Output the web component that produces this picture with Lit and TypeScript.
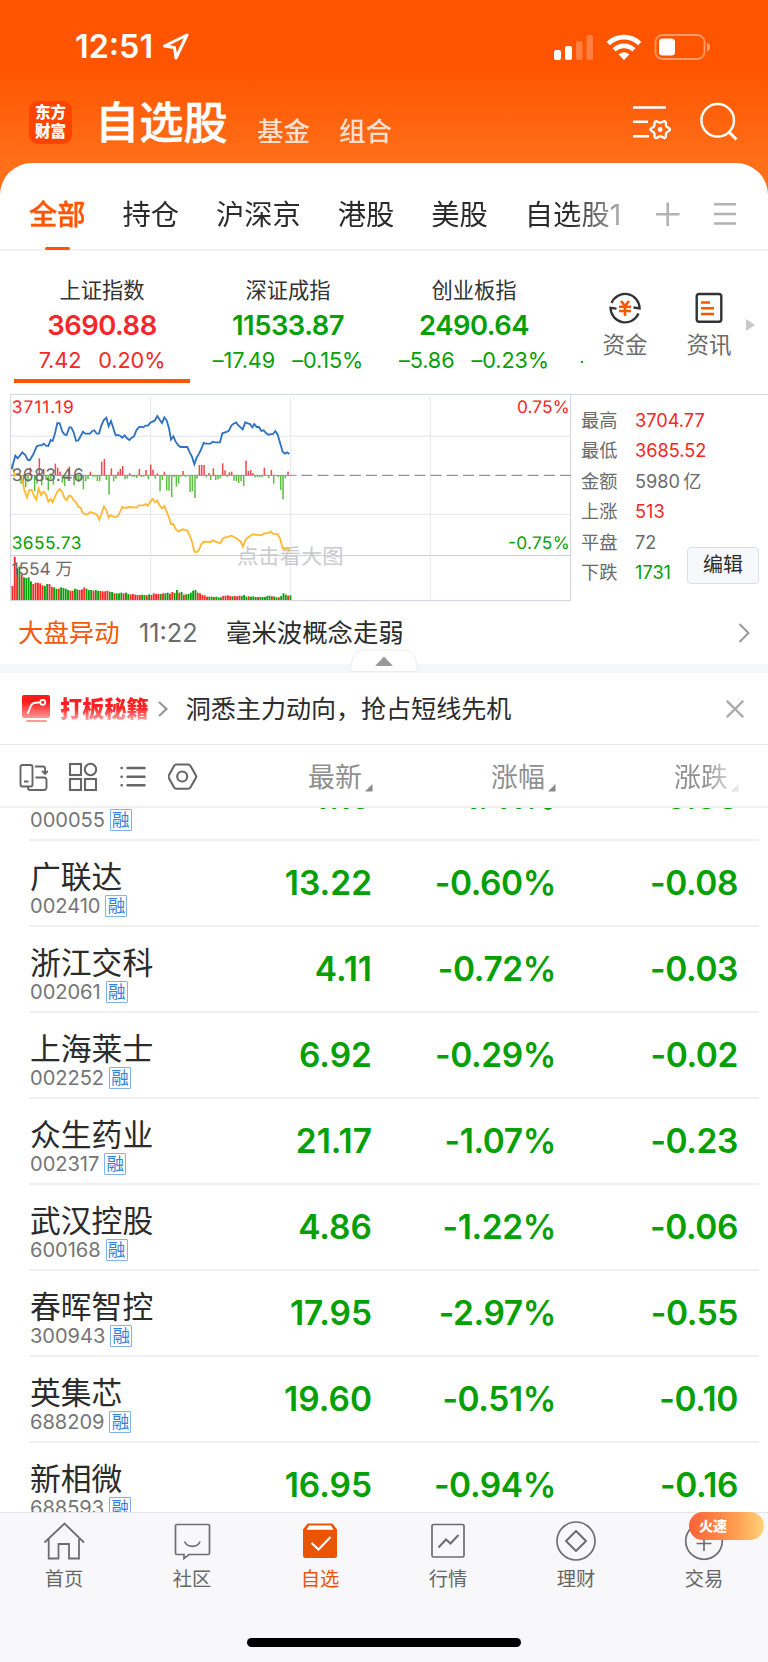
import { LitElement, html, css, svg } from "lit";
import { customElement } from "lit/decorators.js";

const BLUE =
  "35,252 46,212 53,220 67,202 76,210 83,224 89,226 100,208 110,184 117,181 125,181 131,176 138,182 145,183 152,165 158,168 165,145 172,114 179,115 187,140 194,149 200,150 208,127 214,127 221,142 228,167 235,166 242,153 249,140 256,146 270,146 277,138 283,136 290,146 297,146 304,122 311,106 319,98 326,124 333,108 340,130 347,151 354,150 361,153 367,158 374,151 381,160 388,165 395,158 402,154 409,136 416,127 423,125 430,127 436,122 444,122 451,113 464,107 472,93 479,104 486,114 493,97 500,106 507,130 513,164 520,154 527,170 534,180 541,186 562,186 569,202 576,215 583,238 590,218 597,206 604,192 611,174 617,176 632,176 638,170 645,172 660,172 667,145 680,141 687,137 694,122 701,116 708,112 716,122 728,133 736,112 743,115 750,117 757,127 763,117 770,126 777,126 784,138 791,136 798,144 805,149 819,147 826,138 833,149 840,173 848,200 855,206 862,202 868,207";
const YELLOW =
  "35,238 45,272 53,265 61,270 67,285 73,315 81,338 88,315 95,315 103,335 109,344 116,310 123,330 130,320 138,328 145,350 152,342 158,352 165,335 172,320 179,312 186,320 193,338 200,346 207,332 214,334 221,346 228,352 235,365 242,368 249,385 263,389 270,381 283,385 290,388 298,404 305,384 312,364 319,376 326,398 332,391 347,397 355,392 367,366 375,369 388,366 410,368 416,361 430,361 437,357 444,362 451,349 458,342 465,352 472,347 479,362 486,370 493,363 500,380 507,398 513,418 520,417 527,432 534,439 549,433 562,437 569,452 576,470 583,500 590,502 597,494 604,478 611,470 632,471 638,466 660,475 667,462 674,458 694,452 708,459 722,470 729,485 736,466 743,458 757,448 784,451 791,446 805,444 812,439 819,446 833,448 840,460 848,490 855,494 862,489 868,496";
const UP =
  "91:22,118:50,131:18,166:34,173:22,180:10,208:25,271:10,305:40,313:48,334:20,354:10,361:18,368:27,389:5,418:18,438:15,452:31,459:16,472:5,493:10,549:12,598:30,605:30,612:30,627:6,640:20,668:35,675:14,688:8,695:10,738:43,745:12,752:15,758:6,793:22,814:15,864:10";
const DOWN =
  "63:25,70:30,77:35,84:20,104:48,111:25,125:30,138:14,145:45,152:12,160:28,187:22,194:32,201:12,222:30,230:12,236:20,243:12,250:42,257:18,264:12,278:4,285:4,292:17,299:17,319:14,327:58,341:18,348:10,375:12,382:10,396:4,403:5,410:8,424:5,431:4,445:12,466:10,480:48,487:14,500:45,507:46,515:65,522:5,529:34,536:25,543:4,556:5,570:50,577:48,585:68,591:10,619:6,632:14,647:14,654:12,661:8,682:5,702:16,709:17,716:23,723:17,731:32,765:6,772:5,779:6,786:5,806:8,821:25,835:5,842:44,849:72,856:8";
const VOLUME = [
  42, 130, 95, 100, 76, 68, 66, 68, 56, 48, 52, 52, 50, 44, 42, 48, 48, 40, 38, 34, 34, 38, 36, 34, 30, 28, 28, 34, 32, 30,
  32, 38, 34, 30, 30, 28, 30, 27, 27, 26, 26, 28, 25, 24, 20, 20, 20, 22, 20, 22, 18, 17, 18, 16, 15, 15, 16, 15, 14, 17,
  15, 20, 18, 18, 18, 20, 20, 22, 19, 24, 21, 30, 22, 24, 16, 17, 18, 22, 28, 30, 22, 20, 15, 14, 10, 10, 10, 9, 10, 8,
  8, 12, 13, 14, 12, 11, 12, 11, 13, 12, 15, 10, 11, 10, 11, 9, 9, 9, 9, 9, 12, 13, 11, 11, 8, 8, 12, 20, 16, 13, 14,
];
const VCOLOR =
  "rrrgrggggrrrrrggrrggrggggrrggrrrgggrggrrrrggrgggrggrrrrrggrgrrrrgrggrrggrgrgggggrrrrrggrgggrrrrgrrrgggrgggrgggggrggrgggrg";

const bars = (src: string) => src.split(",").map((p) => p.split(":").map(Number));

const INDICES = [
  { name: "上证指数", value: "3690.88", chg: "7.42", pct: "0.20%", up: true },
  { name: "深证成指", value: "11533.87", chg: "–17.49", pct: "–0.15%", up: false },
  { name: "创业板指", value: "2490.64", chg: "–5.86", pct: "–0.23%", up: false },
];
const STATS = [
  ["最高", "3704.77", "red"],
  ["最低", "3685.52", "red"],
  ["金额", "5980 亿", "gray"],
  ["上涨", "513", "red"],
  ["平盘", "72", "gray"],
  ["下跌", "1731", "green"],
];
const ROWS = [
  ["", "000055", "4.19", "-1.41%", "-0.06"],
  ["广联达", "002410", "13.22", "-0.60%", "-0.08"],
  ["浙江交科", "002061", "4.11", "-0.72%", "-0.03"],
  ["上海莱士", "002252", "6.92", "-0.29%", "-0.02"],
  ["众生药业", "002317", "21.17", "-1.07%", "-0.23"],
  ["武汉控股", "600168", "4.86", "-1.22%", "-0.06"],
  ["春晖智控", "300943", "17.95", "-2.97%", "-0.55"],
  ["英集芯", "688209", "19.60", "-0.51%", "-0.10"],
  ["新相微", "688593", "16.95", "-0.94%", "-0.16"],
];

const base = css`
  :host, * { box-sizing: border-box; }
  svg { display: block; flex: none; }
  .red { color: #f82626; }
  .green { color: #05a005; }
  .gray { color: #6b6b6b; }
`;

@customElement("top-header")
class TopHeader extends LitElement {
  static styles = [base, css`
    :host { display: block; height: 200px; color: #fff; background: linear-gradient(#ff5500 0, #ff5500 70px, #ff6f1a 163px, #ff701c 200px); }
    .status { display: flex; align-items: center; height: 93px; padding: 0 57px 0 75px; }
    .time { font-size: 32.3px; font-weight: 600; line-height: 40px; letter-spacing: 0; width: 87px; }
    .grow { flex: 1; }
    .nav { display: flex; height: 61px; padding: 0 30px 0 29px; }
    .logo { width: 43px; height: 43px; margin-top: 8px; border-radius: 9px; background: #ff4400; font-size: 15.5px; font-weight: 900; line-height: 18.5px; padding-top: 3px; text-align: center; }
    .title { margin-left: 23px; font-size: 44.3px; font-weight: 500; line-height: 60px; height: 61px; -webkit-text-stroke: .5px #fff; }
    .link { font-size: 26.5px; font-weight: 500; line-height: 40px; margin: 18px 0 0 29px; opacity: .8; }
    .link + .link { margin-left: 29px; }
    .set { margin-top: 11px; margin-right: 26px; }
    .find { margin-top: 9px; }
  `];
  render() {
    return html`
      <div class="status">
        <span class="time">12:51</span>
        <svg width="27" height="27" viewBox="0 0 27 27"><path d="M25 2 L2.500 13 L12.500 14.600 L14 25 Z" fill="none" stroke="#fff" stroke-width="3" stroke-linejoin="round"/></svg>
        <span class="grow"></span>
        <svg width="158" height="28" viewBox="0 0 158 28" fill="#fff">
          <rect x="1" y="17" width="7" height="10" rx="2"/><rect x="12" y="13" width="7" height="14" rx="2"/>
          <g opacity=".25"><rect x="23" y="8" width="6.500" height="19" rx="2"/><rect x="33.500" y="2" width="6.500" height="25" rx="2"/></g>
          <g fill="none" stroke="#fff" stroke-width="4.800">
            <path d="M55.300 10.600a22.500 22.500 0 0 1 31.400 0"/><path d="M61.200 16.900a14 14 0 0 1 19.600 0"/>
          </g>
          <path d="M71 27l-5.400-5.600a8 8 0 0 1 10.800 0z"/>
          <rect x="102.500" y="2" width="49" height="24" rx="7" fill="none" stroke="#fff" stroke-opacity=".4" stroke-width="1.800"/>
          <rect x="106" y="5.500" width="16" height="17" rx="3.500"/><path d="M154 9.500c4 1 4 8 0 9z" opacity=".45"/>
        </svg>
      </div>
      <div class="nav">
        <div class="logo">东方<br>财富</div>
        <div class="title">自选股</div><div class="link">基金</div><div class="link">组合</div>
        <span class="grow"></span>
        <svg class="set" width="40" height="36" viewBox="0 0 40 36" fill="none" stroke="#fff" stroke-width="2.600">
          <path d="M0 3.500h33M0 17.800h15M0 32.200h16"/>
          <path d="M22.200 17.500C24 16.200 24.600 18.600 27.200 18.600S30.400 16.200 32.200 17.500S32 20.400 33.300 22.200S37 23.800 37 25.500S34.600 27 33.300 28.900S34 32.600 32.200 33.700S29.800 32.400 27.200 32.400S24 34.900 22.200 33.700S22.400 30.800 21.100 28.900S17.500 27.300 17.500 25.500S19.800 24 21.100 22.200S20.400 18.700 22.200 17.500z" stroke-linejoin="round" stroke-width="2.400"/>
          <circle cx="27.200" cy="25.500" r="2.400" fill="#fff" stroke="none"/>
        </svg>
        <svg class="find" width="39" height="40" viewBox="0 0 39 40" fill="none" stroke="#fff" stroke-width="2.500"><circle cx="18.700" cy="18.300" r="16.300"/><path d="M29.500 29.500l8 8" stroke-width="3"/></svg>
      </div>`;
  }
}

@customElement("group-tabs")
class GroupTabs extends LitElement {
  static styles = [base, css`
    :host { display: flex; height: 88px; border-bottom: 2px solid #f3f3f5; padding-right: 31px; color: #2b2b2b; }
    .tabs { display: flex; gap: 36.9px; width: 642px; padding-left: 29px; overflow: hidden; white-space: nowrap; font-size: 28.3px; line-height: 104px; height: 87px;
      -webkit-mask-image: linear-gradient(90deg, #000 570px, rgba(0,0,0,.25) 632px); mask-image: linear-gradient(90deg, #000 570px, rgba(0,0,0,.25) 632px); }
    .on { color: #ff5500; font-weight: 500; -webkit-text-stroke: .4px #ff5500; display: flex; flex-direction: column; align-items: center; height: 87px; }
    .on i { width: 25px; height: 3px; margin-top: -20px; border-radius: 2px; background: #ff5500; }
    .icons { display: flex; justify-content: space-between; flex: 1; padding: 39px 0 0 13px; }
  `];
  render() {
    return html`<div class="tabs">
        <div class="on"><span>全部</span><i></i></div>
        ${["持仓", "沪深京", "港股", "美股", "自选股1"].map((t) => html`<span>${t}</span>`)}
      </div>
      <div class="icons">
        <svg width="26" height="24" viewBox="0 0 26 24" stroke="#b2b2b2" stroke-width="2.600"><path d="M1 12.200h23.500M12.700 .5v23.500"/></svg>
        <svg width="24" height="24" viewBox="0 0 24 24" stroke="#b2b2b2" stroke-width="2.600"><path d="M1 2.300h22M1 12h22M1 21.500h22"/></svg>
      </div>`;
  }
}

@customElement("index-strip")
class IndexStrip extends LitElement {
  static styles = [base, css`
    :host { display: flex; height: 142px; padding-left: 9px; }
    .idx { width: 186px; height: 132px; padding-top: 22px; display: flex; flex-direction: column; align-items: center; flex: none; }
    .name { font-size: 21.3px; line-height: 34px; color: #333; }
    .val { font-size: 27.4px; line-height: 35px; font-weight: 600; letter-spacing: -.5px; margin-top: 1px; }
    .chg { display: flex; gap: 17px; font-size: 21.7px; line-height: 34px; letter-spacing: -.1px; white-space: nowrap; }
    .bar { width: 176px; height: 4px; margin-top: 2px; background: #ff5500; }
    .more { width: 16px; padding-top: 85px; line-height: 30px; padding-left: 14px; flex: none; }
    .dot { display: block; width: 2px; height: 2px; background: #05a005; margin-top: 25px; }
    .act { width: 84px; flex: none; display: flex; flex-direction: column; align-items: center; padding-top: 39px; color: #6b6b6b; font-size: 22.5px; line-height: 36px; }
    .act span { margin-top: 1px; }
    .arrow { margin: 67px 0 0 -5px; }
  `];
  render() {
    return html`${INDICES.map((d, i) => html`<div class="idx ${d.up ? "red" : "green"}">
        <span class="name">${d.name}</span><span class="val">${d.value}</span>
        <span class="chg"><span>${d.chg}</span><span>${d.pct}</span></span>
        ${i === 0 ? html`<span class="bar"></span>` : ""}
      </div>`)}
      <div class="more"><i class="dot"></i></div>
      <div class="act">
        <svg width="36" height="36" viewBox="0 0 36 36" fill="none" stroke="#333" stroke-width="2.300">
          <path d="M4.500 13A14.600 14.600 0 0 1 32.600 18.500L26.500 17.500M31.500 23.500A14.600 14.600 0 0 1 3.500 17.800L9.500 18.600"/>
          <path d="M14 11l4 5 4-5M12 16.800h12M12 21h12M18 16v10" stroke="#ff5500" stroke-width="2.600"/>
        </svg><span>资金</span></div>
      <div class="act">
        <svg width="36" height="36" viewBox="0 0 36 36" fill="none" stroke="#333" stroke-width="2.400"><rect x="5.700" y="4" width="24.600" height="27.800" rx="2.500"/>
          <path d="M10 12.500h9M10 18.300h13M10 24h13" stroke="#ff5500" stroke-width="2.400"/></svg><span>资讯</span></div>
      <svg class="arrow" width="9" height="14" viewBox="0 0 9 14"><path d="M0 1l9 6-9 6z" fill="#c8c8c8"/></svg>`;
  }
}

@customElement("market-chart")
class MarketChart extends LitElement {
  static styles = [base, css`
    :host { display: flex; height: 211px; }
    .lab { font-size: 52px; }
    .side { width: 196px; border-top: 1px solid #d5d7e2; padding: 10px 0 0 9px; margin-top: 1px; position: relative; }
    .stat { display: flex; font-size: 18.2px; line-height: 30.4px; color: #6b6b6b; word-spacing: -2px; }
    .stat span:first-child { width: 54px; }
    .edit { position: absolute; right: 9px; top: 152px; width: 72px; height: 37px; border: 1px solid #dcdee6; border-radius: 4px; background: #f7f8fb; color: #2b2b2b; font-size: 20px; line-height: 34px; text-align: center; }
  `];
  render() {
    return html`<svg width="572" height="211" viewBox="0 24 1716 633" font-size="53" text-rendering="geometricPrecision">
      <g stroke="#e3e6ee" stroke-width="3" fill="none">
        <path d="M33 153.500H1712M33 388H1712M452 36V508M872 36V508M1291 36V508M452 516V646M872 516V646M1291 516V646"/>
        <path d="M32 28H1716M32 28V647H1712V28M32 511.500H1712" stroke="#cfd2de"/>
      </g>
      <path d="M33 271H890" stroke="#777" stroke-width="2.500"/>
      <path d="M904 271H1712" stroke="#777" stroke-width="3" stroke-dasharray="33 15.500"/>
      <text x="711" y="536" font-size="64" fill="#c9cacd">点击看大图</text>
      ${bars(UP).map(([x, h]) => svg`<rect x=${x - 2.2} y=${270 - h} width="4.600" height=${h} fill="#ef4a50"/>`)}
      ${bars(DOWN).map(([x, h]) => svg`<rect x=${x - 2.2} y="271" width="4.600" height=${h} fill="#5fbe46"/>`)}
      ${VOLUME.map((h, i) => svg`<rect x=${34.5 + i * 6.95} y=${645 - h} width="5.600" height=${h} fill=${VCOLOR[i] === "r" ? "#f92a2a" : "#0aa00a"}/>`)}
      <polyline points=${YELLOW} fill="none" stroke="#ffb935" stroke-width="5.500"/>
      <polyline points=${BLUE} fill="none" stroke="#2e73c2" stroke-width="5.500"/>
      <text class="lab" x="35" y="84" fill="#f82626" textLength="186">3711.19</text>
      <text class="lab" x="35" y="288" fill="#6b6b6b" textLength="216">3683.46</text>
      <text class="lab" x="35" y="491" fill="#05a005" textLength="209">3655.73</text>
      <text class="lab" x="35" y="569" fill="#6b6b6b" textLength="183">1554 万</text>
      <text class="lab" x="1551" y="84" fill="#f82626" textLength="158">0.75%</text>
      <text class="lab" x="1524" y="491" fill="#05a005" textLength="185">-0.75%</text>
    </svg>
    <div class="side">
      ${STATS.map(([k, v, c]) => html`<div class="stat"><span>${k}</span><span class=${c}>${v}</span></div>`)}
      <div class="edit">编辑</div>
    </div>`;
  }
}

@customElement("news-promo")
class NewsPromo extends LitElement {
  static styles = [base, css`
    :host { display: block; }
    .news { display: flex; align-items: center; height: 60px; padding: 0 18px 3px 18px; font-size: 25.4px; line-height: 40px; color: #2b2b2b; }
    .tag { color: #f25a0a; width: 121px; }
    .t { color: #6b6b6b; width: 87px; font-size: 25.3px; }
    .grow { flex: 1; }
    .band { height: 9px; background: #f5f6fa; position: relative; }
    .pull { position: absolute; left: 349px; top: -15px; }
    .promo { display: flex; align-items: center; height: 72px; border-bottom: 1px solid #e9e9ec; padding: 0 24px 0 21px; color: #2b2b2b; font-size: 25.05px; line-height: 40px; }
    .brand { margin-left: 9px; font-size: 22.2px; font-weight: 900; line-height: 36px; color: transparent; background: linear-gradient(#ff1e1e 35%, #ff2a2a 50%, #ffa0a0 80%); -webkit-background-clip: text; background-clip: text; }
    .chev { margin: 0 17px 0 8px; }
    .txt { padding-top: 1px; }
  `];
  render() {
    return html`<div class="news"><span class="tag">大盘异动</span><span class="t">11:22</span><span>毫米波概念走弱</span><span class="grow"></span>
        <svg width="12" height="22" viewBox="0 0 12 22" fill="none" stroke="#999" stroke-width="2"><path d="M1.500 2l9 9-9 9"/></svg></div>
      <div class="band"><svg class="pull" width="70" height="24" viewBox="0 0 70 24"><path d="M1 22.500c2-10 2-21 13-21.500h42c11 .5 11 11.500 13 21.500z" fill="#fff" stroke="#ececf0"/><path d="M26 17l9-9.500 9 9.500z" fill="#999"/></svg></div>
      <div class="promo">
        <svg width="30" height="30" viewBox="0 0 30 30"><defs><linearGradient id="g" x2="0" y2="1"><stop offset=".3" stop-color="#ff1a1a"/><stop offset="1" stop-color="#ff9a9a"/></linearGradient></defs>
          <rect x="1" y="1" width="28" height="23" rx="2" fill="url(#g)"/><rect x="5" y="26" width="21" height="2" rx="1" fill="#ff9a9a"/>
          <path d="M6 19.500c3-1 2.500-10 7-10.500l6-.8" fill="none" stroke="#fff" stroke-width="2"/><circle cx="21.800" cy="8.300" r="2.500" fill="none" stroke="#fff" stroke-width="1.800"/></svg>
        <span class="brand">打板秘籍</span>
        <svg class="chev" width="12" height="18" viewBox="0 0 12 18" fill="none" stroke="#999" stroke-width="2.200"><path d="M2 2l7.500 7L2 16"/></svg>
        <span class="txt">洞悉主力动向，抢占短线先机</span><span class="grow"></span>
        <svg width="18" height="18" viewBox="0 0 18 18" stroke="#aaa" stroke-width="2.300"><path d="M.8 .8l16.400 16.400M17.200 .8L.8 17.200"/></svg>
      </div>`;
  }
}

@customElement("quote-table")
class QuoteTable extends LitElement {
  static styles = [base, css`
    :host { display: block; }
    .head { display: flex; height: 63px; border-bottom: 2px solid #f0f0f2; padding: 2px 0 0 18px; align-items: center; color: #8f8f8f; font-size: 26.9px; line-height: 44px; }
    .tools { display: flex; gap: 20px; width: 290px; flex: none; }
    .col { display: flex; gap: 3px; width: 183px; align-items: flex-end; flex: none; }
    .col svg { margin-bottom: 7px; }
    .last { width: 76px; -webkit-mask-image: linear-gradient(90deg, #000 30px, rgba(0,0,0,.2) 62px); mask-image: linear-gradient(90deg, #000 30px, rgba(0,0,0,.2) 62px); }
    .body { height: 704px; overflow: hidden; }
    .rows { margin: -53px 9px 0 29px; }
    .row { display: flex; height: 86px; border-bottom: 2px solid #f0f0f2; }
    .who { width: 200px; padding: 15px 0 0 1px; }
    .name { height: 39px; font-size: 30.8px; line-height: 41px; color: #2b2b2b; white-space: nowrap; }
    .code { display: flex; gap: 5px; height: 22px; font-size: 20.1px; line-height: 22px; color: #757575; letter-spacing: -.05px; }
    .mark { width: 22px; height: 22px; border: 1px solid #7fb2f0; font-size: 17.5px; line-height: 19px; color: #3480de; border-radius: 1px; display: flex; justify-content: center; letter-spacing: 0; }
    .num { text-align: right; font-size: 33.5px; font-weight: 600; line-height: 85px; color: #05a005; width: 182px; letter-spacing: -.4px; }
    .num.first { width: 143px; letter-spacing: 0; }
    .num.pct { width: 184px; letter-spacing: -.4px; }
  `];
  render() {
    const tri = html`<svg width="8" height="8" viewBox="0 0 8 8"><path d="M7.500 0v7.500H0z" fill="#8a8a8a"/></svg>`;
    return html`<div class="head">
        <div class="tools">
          <svg width="30" height="30" viewBox="0 0 30 30" fill="none" stroke="#666" stroke-width="1.900"><rect x="2.500" y="3" width="12" height="21.500" rx="2"/><path d="M6 19.500h4.500M17 4.500h8a2 2 0 0 1 2 2v5M24 8.800l3 3 3-3M17.500 15.500H26a2.500 2.500 0 0 1 2.500 2.500v7.500a2.500 2.500 0 0 1-2.500 2.500H12a2 2 0 0 1-2-2v-1.500"/></svg>
          <svg width="30" height="30" viewBox="0 0 30 30" fill="none" stroke="#666" stroke-width="2.100"><rect x="2" y="2" width="11" height="11"/><circle cx="22.500" cy="7.500" r="5.700"/><rect x="2" y="17" width="11" height="11"/><rect x="17" y="17" width="11" height="11"/></svg>
          <svg width="30" height="30" viewBox="0 0 30 30" fill="none" stroke="#666" stroke-width="2.400" stroke-linecap="round"><path d="M9.500 6h17M9.500 14.700h17M9.500 23.300h17M3.500 6h.3M3.500 14.700h.3M3.500 23.300h.3"/></svg>
          <svg width="30" height="30" viewBox="0 0 30 30" fill="none" stroke="#666" stroke-width="2.100" stroke-linejoin="round"><path d="M8.500 2.500h11.500a3 3 0 0 1 2.500 1.500l5.200 9a3 3 0 0 1 0 3.200l-5.200 9a3 3 0 0 1-2.500 1.500H8.500a3 3 0 0 1-2.500-1.500l-5-9a3 3 0 0 1 0-3.200l5-9a3 3 0 0 1 2.500-1.500z"/><circle cx="14.200" cy="14.500" r="5"/></svg>
        </div>
        <div class="col">最新${tri}</div><div class="col">涨幅${tri}</div><div class="col last">涨跌${tri}</div>
      </div>
      <div class="body"><div class="rows">
        ${ROWS.map(([n, c, p, z, d]) => html`<div class="row">
          <div class="who"><div class="name">${n}</div><div class="code"><span>${c}</span><span class="mark">融</span></div></div>
          <span class="num first">${p}</span><span class="num pct">${z}</span><span class="num">${d}</span></div>`)}
      </div></div>`;
  }
}

@customElement("bottom-nav")
class BottomNav extends LitElement {
  static styles = [base, css`
    :host { display: block; height: 150px; background: #f8f8fb; border-top: 1px solid #e4e4e8; }
    .items { display: grid; grid-template-columns: repeat(6, 128px); height: 125px; color: #666; font-size: 19.3px; line-height: 32px; }
    .item { display: flex; flex-direction: column; align-items: center; padding-top: 7px; position: relative; }
    .item svg { margin-bottom: 1px; }
    .on { color: #ea5504; }
    .hot { position: absolute; left: 49px; top: -1px; width: 75px; height: 28px; border-radius: 14px; padding-left: 10px; background: linear-gradient(90deg, #ff6238, #ff9a4f 60%, #ffd377); color: #fff; font-size: 14px; font-weight: 900; line-height: 27px; }
    .home { width: 274px; height: 9px; border-radius: 5px; background: #000; margin: 0 auto; }
  `];
  render() {
    const s = (d: unknown) => html`<svg width="42" height="42" viewBox="0 0 42 42" fill="none" stroke="#6e6e6e" stroke-width="1.700">${d}</svg>`;
    return html`<div class="items">
      <div class="item">${s(svg`<path d="M1.500 22.500L21.500 3.500l19.500 19M5.700 19v19.500h9.800V24h10.500v14.500h10V19" stroke-width="1.800"/>`)}<span>首页</span></div>
      <div class="item">${s(svg`<path d="M6 4.500h31a1.500 1.500 0 0 1 1.500 1.500v27a1.500 1.500 0 0 1-1.500 1.500H18l-5 4v-4H6A1.500 1.500 0 0 1 4.500 33V6A1.500 1.500 0 0 1 6 4.500zM13.500 21.500c3 6.500 13 6.500 15.500 0"/>`)}<span>社区</span></div>
      <div class="item on">${s(svg`<g stroke="none"><path d="M8.500 3.500h25l4.500 6v26a2.500 2.500 0 0 1-2.500 2.500h-29A2.500 2.500 0 0 1 4 35.500V9.500z" fill="#ea5504"/><path d="M10 5.500h22l2.500 4.300h-27z" fill="#fff"/></g><path d="M12.500 23l7 6.500L31.500 17" stroke="#fff" stroke-width="2"/>`)}<span>自选</span></div>
      <div class="item">${s(svg`<rect x="5" y="4.500" width="32" height="32.500" rx="1.500"/><path d="M11.500 27.500l7.500-8 4.500 4 8-8.500" stroke-width="2"/>`)}<span>行情</span></div>
      <div class="item">${s(svg`<circle cx="21" cy="21" r="19"/><path d="M21 11l10 10-10 10-10-10z" stroke-linejoin="round" stroke-width="2"/>`)}<span>理财</span></div>
      <div class="item">${s(svg`<circle cx="21" cy="21" r="18.300"/><path d="M13.500 18h15M13.500 23.500h15M21 15v16"/>`)}<span>交易</span><span class="hot">火速</span></div>
    </div><div class="home"></div>`;
  }
}

@customElement("app-root")
class AppRoot extends LitElement {
  static styles = css`
    :host { display: block; width: 768px; height: 1662px; overflow: hidden; background: #fff; font-family: Inter, "Noto Sans CJK SC", sans-serif; }
    .sheet { background: #fff; border-radius: 32px 32px 0 0; margin-top: -37px; position: relative; }
  `;
  render() {
    return html`<top-header></top-header>
      <div class="sheet">
        <group-tabs></group-tabs><index-strip></index-strip><market-chart></market-chart>
        <news-promo></news-promo><quote-table></quote-table><bottom-nav></bottom-nav>
      </div>`;
  }
}
